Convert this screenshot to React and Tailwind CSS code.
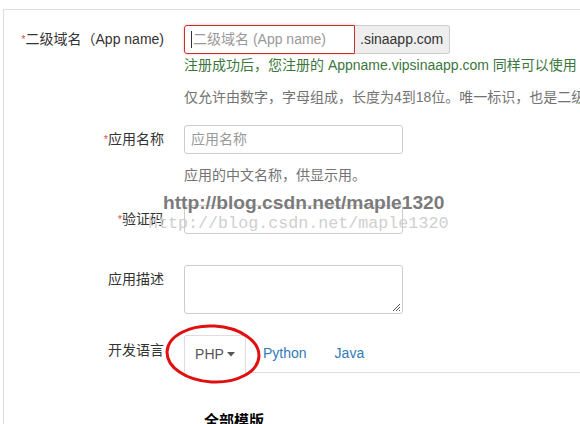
export default function App() {
  const font = { fontFamily: '"Liberation Sans", "Noto Sans CJK SC", sans-serif' };
  return (
    <div className="relative w-[580px] h-[424px] overflow-hidden bg-white text-[14px] text-[#333]" style={font}>
      <div className="pt-[9px] pl-[3px] h-full">
        <div className="border-t border-l border-[#ddd] h-full w-[700px] pt-[15px]">
          {/* Row 1 */}
          <div className="flex items-start">
            <div className="w-[160px] text-right leading-[29px] whitespace-nowrap">
              <span className="text-[#d9534f] text-[11px] align-top">*</span>二级域名（App name)
            </div>
            <div className="ml-[20px] flex flex-col">
              <div className="flex">
                <div className="w-[171px] h-[29px] border border-[#c9302c] rounded-l-[3px] flex items-center pl-[6px] text-[#999] shadow-[0_0_3px_rgba(200,50,50,0.35)]">
                  <span className="inline-block w-px h-[17px] bg-[#333] mr-[1px]"></span>二级域名 (App name)
                </div>
                <div className="w-[95px] h-[29px] border border-l-0 border-[#ccc] bg-[#eee] rounded-r-[3px] flex items-center pl-[5px] text-[#333]">
                  .sinaapp.com
                </div>
              </div>
              <div className="h-[20px] mt-[1px] leading-[20px] text-[#3c763d] whitespace-nowrap">
                注册成功后，您注册的 Appname.vipsinaapp.com 同样可以使用
              </div>
              <div className="h-[20px] mt-[12px] leading-[20px] text-[#737373] whitespace-nowrap">
                仅允许由数字，字母组成，长度为4到18位。唯一标识，也是二级域名
              </div>
            </div>
          </div>
          {/* Row 2 */}
          <div className="flex items-start mt-[18px]">
            <div className="w-[160px] text-right leading-[29px] whitespace-nowrap">
              <span className="text-[#d9534f] text-[11px] align-top">*</span>应用名称
            </div>
            <div className="ml-[20px] flex flex-col">
              <div className="w-[219px] h-[29px] border border-[#ccc] rounded-[3px] flex items-center pl-[6px] text-[#999]">
                应用名称
              </div>
              <div className="h-[20px] mt-[11px] leading-[20px] text-[#737373] whitespace-nowrap">
                应用的中文名称，供显示用。
              </div>
            </div>
          </div>
          {/* Row 3 */}
          <div className="flex items-start mt-[20px]">
            <div className="w-[160px] text-right leading-[29px] whitespace-nowrap">
              <span className="text-[#d9534f] text-[11px] align-top">*</span>验证码
            </div>
            <div className="ml-[20px]">
              <div className="w-[219px] h-[29px] border border-[#ccc] rounded-[3px]"></div>
            </div>
          </div>
          {/* Row 4 */}
          <div className="flex items-start mt-[31px]">
            <div className="w-[160px] text-right leading-[29px] whitespace-nowrap">应用描述</div>
            <div className="ml-[20px]">
              <div className="relative w-[219px] h-[49px] border border-[#ccc] rounded-[3px]">
                <svg className="absolute right-[1px] bottom-[1px]" width="9" height="9" viewBox="0 0 9 9">
                  <path d="M8 1 L1 8 M8 4 L4 8 M8 7 L7 8" stroke="#555" strokeWidth="1" />
                </svg>
              </div>
            </div>
          </div>
          {/* Row 5 */}
          <div className="flex items-start mt-[21px]">
            <div className="w-[160px] text-right leading-[29px] mt-[1px] whitespace-nowrap">开发语言</div>
            <div className="ml-[20px] flex-1 flex items-end border-b border-[#ddd] h-[38px]">
              <div className="h-[38px] w-[62px] border border-b-0 border-[#ddd] rounded-t-[3px] bg-white -mb-px flex items-center justify-center text-[#555]">
                PHP
                <svg className="ml-[3px]" width="8" height="5" viewBox="0 0 8 5">
                  <path d="M0 0 L8 0 L4 4.5 Z" fill="#555" />
                </svg>
              </div>
              <div className="h-[37px] ml-[17px] flex items-center text-[#337ab7]">Python</div>
              <div className="h-[37px] ml-[28px] flex items-center text-[#337ab7]">Java</div>
            </div>
          </div>
          {/* Bottom */}
          <div className="mt-[37px] ml-[200px] font-bold text-[15px] text-black whitespace-nowrap">全部模版</div>
        </div>
      </div>

      {/* watermark */}
      <div className="absolute left-[163px] top-[191px] text-[19.2px] font-bold text-[#7b7b7b] whitespace-nowrap leading-[24px]" style={{ fontFamily: '"Liberation Sans", sans-serif', textShadow: '0 0 2px rgba(255,255,255,0.8)' }}>
        http://blog.csdn.net/maple1320
      </div>
      <div className="absolute left-[148px] top-[213px] text-[16.7px] text-[#cfcfcf] whitespace-nowrap leading-[22px]" style={{ fontFamily: '"Liberation Mono", monospace' }}>
        http://blog.csdn.net/maple1320
      </div>

      {/* red ellipse */}
      <svg className="absolute left-0 top-0 pointer-events-none" width="580" height="424">
        <ellipse cx="213" cy="354" rx="46" ry="28" fill="none" stroke="#e01010" strokeWidth="3" transform="rotate(3 213 354)" />
      </svg>
    </div>
  );
}
